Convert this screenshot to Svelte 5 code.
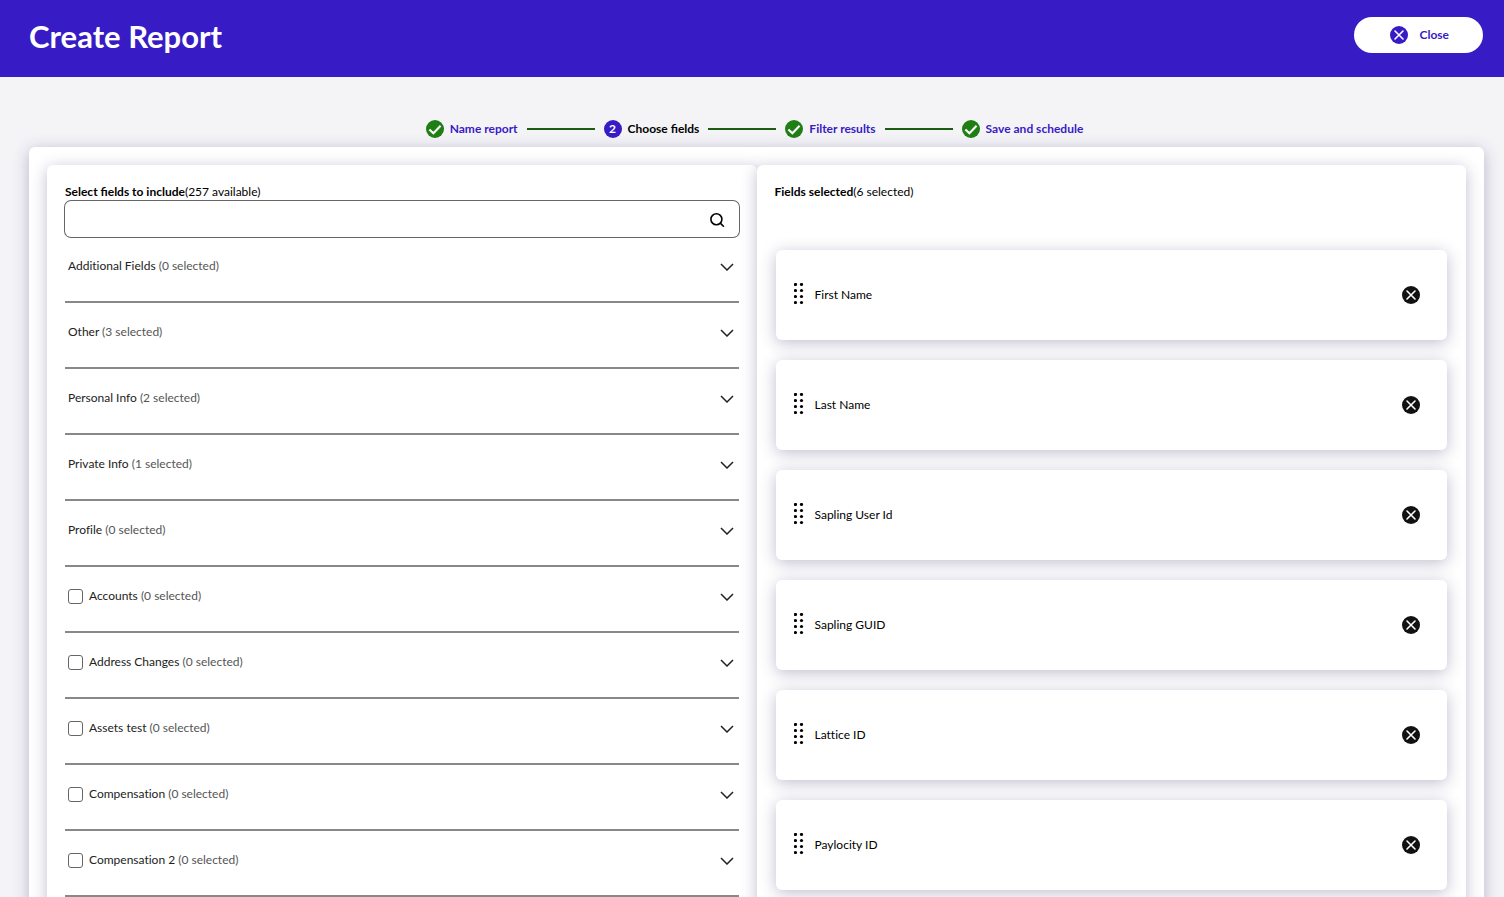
<script>
	let query = $state('');

	const steps = [
		{ label: 'Name report', done: true },
		{ label: 'Choose fields', done: false },
		{ label: 'Filter results', done: true },
		{ label: 'Save and schedule', done: true }
	];

	let groups = $state([
		{ name: 'Additional Fields', count: 0 },
		{ name: 'Other', count: 3 },
		{ name: 'Personal Info', count: 2 },
		{ name: 'Private Info', count: 1 },
		{ name: 'Profile', count: 0 },
		{ name: 'Accounts', count: 0, custom: true, checked: false },
		{ name: 'Address Changes', count: 0, custom: true, checked: false },
		{ name: 'Assets test', count: 0, custom: true, checked: false },
		{ name: 'Compensation', count: 0, custom: true, checked: false },
		{ name: 'Compensation 2', count: 0, custom: true, checked: false }
	]);

	let selected = $state([
		'First Name',
		'Last Name',
		'Sapling User Id',
		'Sapling GUID',
		'Lattice ID',
		'Paylocity ID'
	]);

	let visible = $derived(groups.filter(g => g.name.toLowerCase().includes(query.toLowerCase())));

	function remove(field) {
		selected = selected.filter(f => f !== field);
	}
</script>

{#snippet cross()}
	<svg class="cross" viewBox="0 0 18 18" aria-hidden="true">
		<circle cx="9" cy="9" r="9" fill="currentColor" />
		<path d="M5 5l8 8M13 5l-8 8" fill="none" stroke="#fff" stroke-width="1.6" stroke-linecap="round" />
	</svg>
{/snippet}

<header>
	<h1>Create Report</h1>
	<button class="close" type="button">{@render cross()}Close</button>
</header>

<main>
	<ol class="steps">
		{#each steps as step, i}
			<li>
				{#if step.done}
					<svg class="tick" viewBox="0 0 18 18" aria-hidden="true">
						<circle cx="9" cy="9" r="9" fill="#1f7f14" />
						<path d="M3.4 9.4l4 3.8 7.2-7.4" fill="none" stroke="#fff" stroke-width="2.1" />
					</svg>
					<a href="#step-{i + 1}">{step.label}</a>
				{:else}
					<span class="number">{i + 1}</span>
					<span>{step.label}</span>
				{/if}
			</li>
		{/each}
	</ol>

	<div class="card">
		<section class="panel">
			<label class="heading" for="search"><b>Select fields to include</b>(257 available)</label>
			<div class="search">
				<input id="search" type="text" bind:value={query}>
				<svg viewBox="0 0 16 16" aria-hidden="true">
					<circle cx="7.4" cy="8.2" r="5.5" />
					<path d="M11.3 12.1l3.6 3.6" />
				</svg>
			</div>
			<ul class="groups">
				{#each visible as group}
					<li>
						{#if group.custom}
							<label>
								<input type="checkbox" bind:checked={group.checked}>
								<span>{group.name} <small>({group.count} selected)</small></span>
							</label>
						{:else}
							<span>{group.name} <small>({group.count} selected)</small></span>
						{/if}
						<button type="button" aria-label="Expand {group.name}">
							<svg viewBox="0 0 14 8" aria-hidden="true"><path d="M1 1l6 6 6-6" /></svg>
						</button>
					</li>
				{/each}
			</ul>
		</section>

		<section class="panel">
			<h2 class="heading"><b>Fields selected</b>({selected.length} selected)</h2>
			<ul class="fields">
				{#each selected as field}
					<li>
						<svg class="grip" viewBox="0 0 10 22" aria-hidden="true">
							{#each [1.5, 7.5, 13.5, 19.5] as y}
								<circle cx="1.5" cy={y} r="1.6" />
								<circle cx="7.5" cy={y} r="1.6" />
							{/each}
						</svg>
						<span>{field}</span>
						<button type="button" aria-label="Remove {field}" onclick={() => remove(field)}>
							{@render cross()}
						</button>
					</li>
				{/each}
			</ul>
		</section>
	</div>
</main>

<style>
	:global(html) {
		scrollbar-width: none;
	}
	:global(body) {
		margin: 0;
		background: #f4f4f7;
		color: #000;
		font: 12px/18px Lato, sans-serif;
	}
	header {
		display: flex;
		align-items: flex-start;
		justify-content: space-between;
		height: 77px;
		padding: 17px 21px 0 29px;
		box-sizing: border-box;
		background: #371bc5;
		color: #fff;
	}
	h1 {
		margin: 0;
		font-size: 31px;
		line-height: 38px;
	}
	button {
		border: 0;
		padding: 0;
		background: none;
		font: inherit;
		cursor: pointer;
	}
	svg {
		display: block;
		flex: none;
	}
	.close {
		display: flex;
		align-items: center;
		gap: 12px;
		height: 36px;
		padding: 0 34px 0 36px;
		border-radius: 18px;
		background: #fff;
		color: #371bc5;
		font-weight: 700;
	}
	.cross,
	.tick {
		width: 18px;
		height: 18px;
	}
	main {
		padding: 43px 20px 20px 29px;
	}
	ul,
	ol {
		list-style: none;
		margin: 0;
		padding: 0;
	}
	.steps {
		display: flex;
		justify-content: center;
		margin-bottom: 9px;
		padding-right: 4px;
		font-weight: 700;
	}
	.steps li {
		display: flex;
		align-items: center;
		gap: 6px;
	}
	.steps li:not(:last-child)::after {
		content: '';
		width: 68px;
		height: 2px;
		margin: 0 9px 0 3px;
		background: #1a5c10;
	}
	.steps a {
		color: #371bc5;
		text-decoration: none;
	}
	.number {
		width: 18px;
		border-radius: 50%;
		background: #371bc5;
		color: #fff;
		text-align: center;
	}
	.card,
	.panel,
	.fields li {
		border-radius: 6px;
		background: #fff;
		box-shadow: 0 3px 16px rgba(48, 40, 100, 0.3);
	}
	.card {
		display: grid;
		grid-template-columns: 1fr 1fr;
		padding: 18px;
	}
	.panel {
		padding: 18px;
	}
	.heading {
		display: block;
		margin: 0;
		font-size: 12px;
		font-weight: 400;
	}
	.search {
		display: flex;
		align-items: center;
		height: 36px;
		padding-right: 14px;
		border-radius: 6px;
		box-shadow: 0 0 0 1px #666;
	}
	.search input {
		flex: 1;
		height: 100%;
		box-sizing: border-box;
		padding: 0 12px;
		border: 0;
		outline: 0;
		background: none;
		font: inherit;
	}
	.search svg {
		width: 16px;
		height: 16px;
		fill: none;
		stroke: #000;
		stroke-width: 1.6;
	}
	.groups,
	.fields {
		font-variant-ligatures: none;
	}
	.groups li {
		display: flex;
		align-items: flex-start;
		justify-content: space-between;
		height: 66px;
		padding: 20px 5px 0 3px;
		box-sizing: border-box;
		border-bottom: 2px solid #888;
		color: #222;
	}
	.groups label {
		display: flex;
		align-items: center;
		gap: 6px;
	}
	.groups small {
		color: #555;
		font-size: 12px;
	}
	.groups input {
		appearance: none;
		width: 15px;
		height: 15px;
		margin: 0;
		border: 1px solid #666;
		border-radius: 3px;
		background: #fff;
	}
	.groups input:checked {
		background: #371bc5;
	}
	.groups button {
		padding: 6px 0;
	}
	.groups svg {
		width: 14px;
		height: 8px;
		fill: none;
		stroke: #222;
		stroke-width: 1.5;
	}
	.fields {
		display: grid;
		gap: 20px;
		padding: 49px 1px 0;
	}
	.fields li {
		display: flex;
		align-items: center;
		height: 90px;
		padding: 0 27px 0 18px;
		box-sizing: border-box;
	}
	.fields span {
		flex: 1;
		margin-left: 11px;
	}
	.fields button {
		color: #111;
	}
	.grip {
		width: 10px;
		height: 22px;
		margin-bottom: 2px;
	}
</style>
